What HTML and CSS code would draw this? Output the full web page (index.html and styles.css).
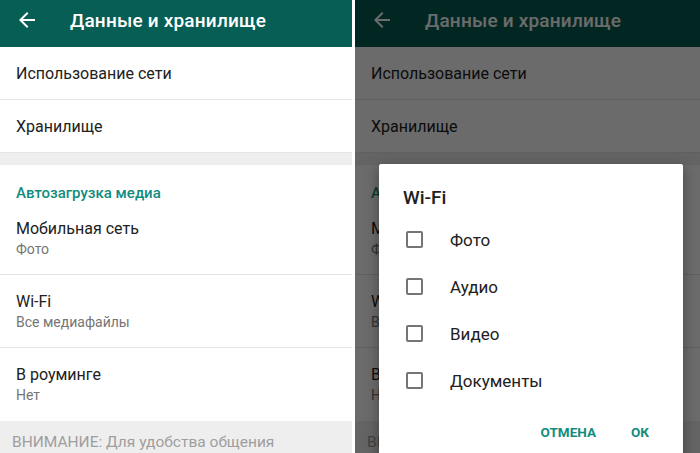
FILE: index.html
```html
<!DOCTYPE html>
<html lang="ru">

<head>
  <meta charset="UTF-8">
  <meta name="viewport" content="width=device-width, initial-scale=1.0">
  <title>Данные и хранилище</title>
  <link rel="stylesheet" href="styles.css">
</head>

<body>
  <div class="screens">

    <!-- left screen: plain settings list -->
    <div class="screen screen-left">
      <div class="toolbar">
        <svg class="back" viewBox="0 0 24 24" width="24" height="24">
          <path d="M20 11H7.83l5.59-5.59L12 4l-8 8 8 8 1.41-1.41L7.83 13H20v-2z" fill="currentColor" />
        </svg>
        <span class="toolbar-title">Данные и хранилище</span>
      </div>
      <div class="row">Использование сети</div>
      <div class="row">Хранилище</div>
      <div class="band"></div>
      <div class="section-title">Автозагрузка медиа</div>
      <div class="item">
        <div class="item-title">Мобильная сеть</div>
        <div class="item-sub">Фото</div>
      </div>
      <div class="item">
        <div class="item-title">Wi-Fi</div>
        <div class="item-sub">Все медиафайлы</div>
      </div>
      <div class="item item-last">
        <div class="item-title">В роуминге</div>
        <div class="item-sub">Нет</div>
      </div>
      <div class="notice">ВНИМАНИЕ: Для удобства общения</div>
    </div>

    <!-- right screen: same list with the Wi-Fi dialog open -->
    <div class="screen screen-right">
      <div class="toolbar">
        <svg class="back" viewBox="0 0 24 24" width="24" height="24">
          <path d="M20 11H7.83l5.59-5.59L12 4l-8 8 8 8 1.41-1.41L7.83 13H20v-2z" fill="currentColor" />
        </svg>
        <span class="toolbar-title">Данные и хранилище</span>
      </div>
      <div class="row">Использование сети</div>
      <div class="row">Хранилище</div>
      <div class="band"></div>
      <div class="section-title">Автозагрузка медиа</div>
      <div class="item">
        <div class="item-title">Мобильная сеть</div>
        <div class="item-sub">Фото</div>
      </div>
      <div class="item">
        <div class="item-title">Wi-Fi</div>
        <div class="item-sub">Все медиафайлы</div>
      </div>
      <div class="item item-last">
        <div class="item-title">В роуминге</div>
        <div class="item-sub">Нет</div>
      </div>
      <div class="notice">ВНИМАНИЕ: Для удобства общения</div>

      <div class="scrim"></div>

      <div class="dialog">
        <div class="dialog-title">Wi-Fi</div>
        <div class="option"><span class="checkbox"></span>Фото</div>
        <div class="option"><span class="checkbox"></span>Аудио</div>
        <div class="option"><span class="checkbox"></span>Видео</div>
        <div class="option"><span class="checkbox"></span>Документы</div>
        <div class="dialog-actions">
          <span class="btn">ОТМЕНА</span>
          <span class="btn">ОК</span>
        </div>
      </div>
    </div>

  </div>
</body>

</html>
```

FILE: styles.css
```css
html,
body {
  margin: 0;
  padding: 0;
  background-color: #ffffff;
  font-family: Roboto, "Noto Sans", sans-serif;
  color: #212121;
  overflow: hidden;
}

.screens {
  display: flex;
  gap: 3px;
  width: 700px;
  height: 453px;
  overflow: hidden;
}

.screen {
  position: relative;
  height: 453px;
  overflow: hidden;
  background-color: #ffffff;
}

.screen-left {
  width: 352px;
}

.screen-right {
  flex: 1;
}

/* toolbar */
.toolbar {
  display: flex;
  align-items: center;
  height: 47px;
  padding: 0 0 7px 15px;
  box-sizing: border-box;
  background-color: #075e54;
  color: #ffffff;
}

.back {
  flex: none;
}

.toolbar-title {
  margin-left: 31px;
  font-size: 19px;
  font-weight: 500;
  letter-spacing: 0.2px;
}

/* list rows */
.row {
  padding: 17px 16px 15px;
  line-height: 20px;
  font-size: 16px;
  border-bottom: 1px solid #e4e4e4;
}

.band {
  height: 12px;
  background-color: #eeeeee;
}

.section-title {
  padding: 19px 16px 0;
  line-height: 18px;
  font-size: 15px;
  font-weight: 500;
  color: #128c7e;
}

.item {
  padding: 17px 16px 15px;
  border-bottom: 1px solid #e4e4e4;
}

.item-last {
  border-bottom: none;
  padding-bottom: 16px;
}

.item-title {
  line-height: 20px;
  font-size: 16px;
}

.item-sub {
  line-height: 20px;
  font-size: 14px;
  color: #757575;
}

.notice {
  height: 40px;
  padding: 11px 12px 0;
  line-height: 20px;
  font-size: 15.5px;
  color: #9e9e9e;
  background-color: #eeeeee;
}

/* dimmed layer and dialog on the right screen */
.scrim {
  position: absolute;
  inset: 0;
  background-color: rgba(0, 0, 0, 0.58);
}

.dialog {
  position: absolute;
  left: 24px;
  top: 164px;
  width: 304px;
  height: 310px;
  padding: 22px 0 0 24px;
  box-sizing: border-box;
  background-color: #ffffff;
  border-radius: 2px;
  box-shadow: 0 4px 14px rgba(0, 0, 0, 0.35);
}

.dialog-title {
  line-height: 24px;
  font-size: 19px;
  font-weight: 500;
  margin-bottom: 6px;
}

.option {
  display: flex;
  align-items: center;
  height: 47px;
  font-size: 17px;
}

.checkbox {
  width: 13px;
  height: 13px;
  margin-left: 3px;
  margin-right: 27px;
  border: 2px solid #757575;
  border-radius: 2px;
}

.dialog-actions {
  display: flex;
  justify-content: flex-end;
  gap: 35px;
  padding-right: 34px;
  margin-top: 10px;
  line-height: 36px;
}

.btn {
  font-size: 13.5px;
  font-weight: 700;
  color: #128c7e;
}
```
